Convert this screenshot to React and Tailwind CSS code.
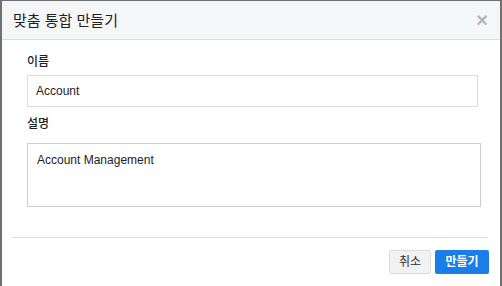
import { useState } from 'react';

const App = () => {
  const [name, setName] = useState('Account');
  const [desc, setDesc] = useState('Account Management');

  return (
    <div
      className="w-[502px] h-[286px] overflow-hidden bg-white"
      style={{ fontFamily: '"Liberation Sans", "Noto Sans CJK KR", sans-serif' }}
    >
      <div className="w-full h-full flex flex-col border-l-2 border-t border-r-2 border-[#707070]">
        <div className="h-[39px] flex items-center justify-between bg-[#f5f6f7] border-b border-[#dddddd] pl-[11px] pr-[12px]">
          <h1 className="text-[15px] text-[#222] leading-none">맞춤 통합 만들기</h1>
          <button className="text-[#b5b5b5] text-[20px] leading-none font-bold">×</button>
        </div>

        <div className="pl-[25px] pr-[20px] pt-[12px]">
          <label className="block text-[12px] font-medium text-[#222] leading-[20px]">이름</label>
          <input
            type="text"
            value={name}
            onChange={(e) => setName(e.target.value)}
            className="mt-[3px] w-[451px] h-[32px] px-[8px] text-[12px] text-[#222] border border-[#dcdcdc] outline-none"
          />
          <label className="block mt-[7px] text-[12px] font-medium text-[#222] leading-[20px]">설명</label>
          <textarea
            value={desc}
            onChange={(e) => setDesc(e.target.value)}
            className="mt-[9px] w-[454px] h-[64px] px-[9px] py-[7px] text-[12px] text-[#222] border border-[#c9ced6] outline-none resize-none block"
          />
        </div>

        <div className="mt-[30px] mx-[10px] w-[476px] border-t border-[#dedede]" />

        <div className="flex justify-end gap-[4px] pt-[12px] pr-[11px]">
          <button className="h-[24px] w-[42px] text-[12px] text-[#333] bg-[#f2f2f2] border border-[#dddddd] rounded-[2px]">
            취소
          </button>
          <button className="h-[24px] w-[54px] text-[12px] font-semibold text-white bg-[#1a7ee8] rounded-[2px]">
            만들기
          </button>
        </div>
      </div>
    </div>
  );
};

export default App;
